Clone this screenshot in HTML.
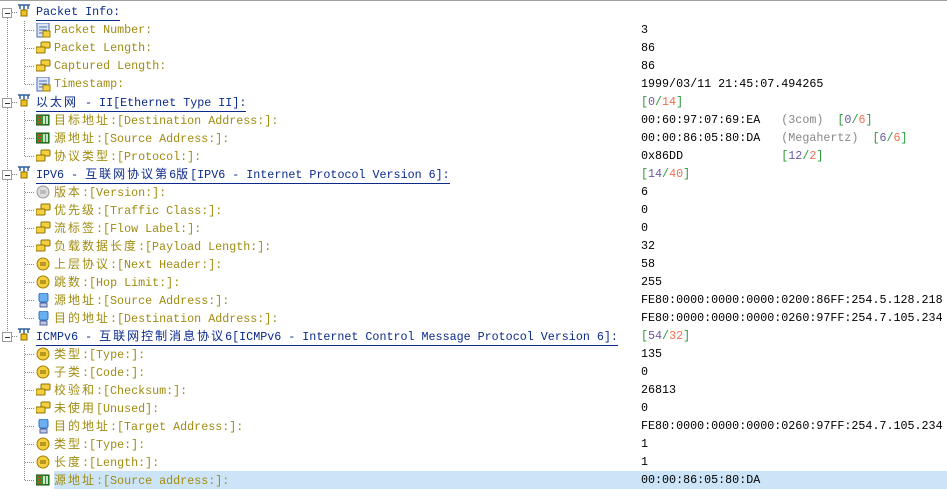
<!DOCTYPE html>
<html><head><meta charset="utf-8"><style>
body{margin:0;width:947px;height:498px;background:#fff;overflow:hidden;position:relative;font-family:"Liberation Mono","Noto Sans CJK SC",monospace;font-size:11.7px}
.top{position:absolute;left:0;top:0;width:947px;height:1px;background:#a0a0a0}
.r{position:absolute;left:0;height:18px;line-height:18px;white-space:nowrap;width:947px}
.h{position:absolute;left:36px;color:#0a2a8c;border-bottom:1px solid #0a2a8c;line-height:16px;top:1px}
.l{position:absolute;left:54px;color:#a08c10;top:0px}
.v{position:absolute;left:641px;color:#000;top:0px}
.c{font-family:"Noto Sans CJK SC",sans-serif;font-size:12px;letter-spacing:2px}
.g{color:#888}
.bk{color:#2a9a3a}.n1{color:#6a5aa0}.n2{color:#f07050}
.vd{position:absolute;width:1px;background-image:linear-gradient(#888 50%,transparent 50%);background-size:1px 2px}
.hd{position:absolute;height:1px;background-image:linear-gradient(90deg,#888 50%,transparent 50%);background-size:2px 1px}
.box{position:absolute;left:2px;width:8px;height:8px;border:1px solid #999;background:#fff}
.box:after{content:"";position:absolute;left:2px;top:4px;width:5px;height:1px;background:#333}
.ic{position:absolute;left:36px;top:2px}
.ri{position:absolute;left:17px;top:1px}
.sel{position:absolute;left:54px;top:471px;width:893px;height:18px;background:#cce4f7}
</style></head><body>
<div class="top"></div>
<div class="sel"></div>
<div class="vd" style="left:7px;top:18px;height:316px"></div>
<div class="vd" style="left:24px;top:21px;height:63px"></div>
<div class="vd" style="left:24px;top:111px;height:45px"></div>
<div class="vd" style="left:24px;top:183px;height:135px"></div>
<div class="vd" style="left:24px;top:345px;height:135px"></div>
<svg width="0" height="0" style="position:absolute">
<defs>
<g id="doc"><rect x="1" y="0" width="12" height="14" fill="#dde6f8" stroke="#4a6ab0"/><path d="M3 4h8M3 7h8M3 10h5" stroke="#4a6ab0"/><rect x="7" y="8" width="7" height="6" fill="#f4d040" stroke="#a08000"/></g>
<g id="tag"><rect x="5" y="1" width="9" height="6" rx="1" fill="#f4d040" stroke="#907000"/><rect x="0" y="6" width="9" height="6" rx="1" fill="#f4d040" stroke="#907000"/></g>
<g id="chip"><rect x="0" y="2" width="13" height="10" fill="#2a9a2a" stroke="#105010"/><path d="M2 4h3M2 7h3M2 10h3" stroke="#e03030" stroke-width="1.5"/><path d="M8 3v8M11 3v8" stroke="#fff" stroke-width="1.5"/></g>
<g id="gc"><circle cx="7" cy="7" r="6" fill="#ddd" stroke="#999"/><path d="M4 6h6M4 8h6" stroke="#999"/></g>
<g id="yc"><circle cx="7" cy="7" r="6" fill="#f4d040" stroke="#a08000"/><path d="M4 6h6M4 8h6" stroke="#806000"/></g>
<g id="mon"><rect x="3" y="0" width="9" height="9" rx="2" fill="#6ab0f0" stroke="#3070c0"/><rect x="4" y="10" width="7" height="4" fill="#c0c8e0" stroke="#5060a0"/></g>
<g id="root"><path d="M1 1h12M7 1v5M3 1v4M11 1v4" stroke="#3060a0" stroke-width="1.5"/><rect x="4" y="6" width="6" height="6" fill="#f0c020" stroke="#907000"/></g>
</defs></svg>

<div class="r" style="top:3px"><div class="box" style="top:5px"></div><div class="hd" style="left:12px;top:9px;width:5px"></div><svg class="ri" width="14" height="14"><use href="#root"/></svg><span class="h">Packet Info:</span></div>
<div class="r" style="top:21px"><div class="hd" style="left:25px;top:9px;width:10px"></div><svg class="ic" width="15" height="15"><use href="#doc"/></svg><span class="l">Packet Number:</span><span class="v">3</span></div>
<div class="r" style="top:39px"><div class="hd" style="left:25px;top:9px;width:10px"></div><svg class="ic" width="15" height="15"><use href="#tag"/></svg><span class="l">Packet Length:</span><span class="v">86</span></div>
<div class="r" style="top:57px"><div class="hd" style="left:25px;top:9px;width:10px"></div><svg class="ic" width="15" height="15"><use href="#tag"/></svg><span class="l">Captured Length:</span><span class="v">86</span></div>
<div class="r" style="top:75px"><div class="hd" style="left:25px;top:9px;width:10px"></div><svg class="ic" width="15" height="15"><use href="#doc"/></svg><span class="l">Timestamp:</span><span class="v">1999/03/11 21:45:07.494265</span></div>

<div class="r" style="top:93px"><div class="box" style="top:5px"></div><div class="hd" style="left:12px;top:9px;width:5px"></div><svg class="ri" width="14" height="14"><use href="#root"/></svg><span class="h"><span class="c">以太网</span> - II[Ethernet Type II]:</span><span class="v"><span class="bk">[</span><span class="n1">0</span><span class="bk">/</span><span class="n2">14</span><span class="bk">]</span></span></div>
<div class="r" style="top:111px"><div class="hd" style="left:25px;top:9px;width:10px"></div><svg class="ic" width="15" height="15"><use href="#chip"/></svg><span class="l"><span class="c">目标地址</span>:[Destination Address:]:</span><span class="v">00:60:97:07:69:EA&nbsp;&nbsp;&nbsp;<span class="g">(3com)</span>&nbsp;&nbsp;<span class="bk">[</span><span class="n1">0</span><span class="bk">/</span><span class="n2">6</span><span class="bk">]</span></span></div>
<div class="r" style="top:129px"><div class="hd" style="left:25px;top:9px;width:10px"></div><svg class="ic" width="15" height="15"><use href="#chip"/></svg><span class="l"><span class="c">源地址</span>:[Source Address:]:</span><span class="v">00:00:86:05:80:DA&nbsp;&nbsp;&nbsp;<span class="g">(Megahertz)</span>&nbsp;&nbsp;<span class="bk">[</span><span class="n1">6</span><span class="bk">/</span><span class="n2">6</span><span class="bk">]</span></span></div>
<div class="r" style="top:147px"><div class="hd" style="left:25px;top:9px;width:10px"></div><svg class="ic" width="15" height="15"><use href="#tag"/></svg><span class="l"><span class="c">协议类型</span>:[Protocol:]:</span><span class="v">0x86DD&nbsp;&nbsp;&nbsp;&nbsp;&nbsp;&nbsp;&nbsp;&nbsp;&nbsp;&nbsp;&nbsp;&nbsp;&nbsp;&nbsp;<span class="bk">[</span><span class="n1">12</span><span class="bk">/</span><span class="n2">2</span><span class="bk">]</span></span></div>

<div class="r" style="top:165px"><div class="box" style="top:5px"></div><div class="hd" style="left:12px;top:9px;width:5px"></div><svg class="ri" width="14" height="14"><use href="#root"/></svg><span class="h">IPV6 - <span class="c">互联网协议第</span>6<span class="c">版</span>[IPV6 - Internet Protocol Version 6]:</span><span class="v"><span class="bk">[</span><span class="n1">14</span><span class="bk">/</span><span class="n2">40</span><span class="bk">]</span></span></div>
<div class="r" style="top:183px"><div class="hd" style="left:25px;top:9px;width:10px"></div><svg class="ic" width="15" height="15"><use href="#gc"/></svg><span class="l"><span class="c">版本</span>:[Version:]:</span><span class="v">6</span></div>
<div class="r" style="top:201px"><div class="hd" style="left:25px;top:9px;width:10px"></div><svg class="ic" width="15" height="15"><use href="#tag"/></svg><span class="l"><span class="c">优先级</span>:[Traffic Class:]:</span><span class="v">0</span></div>
<div class="r" style="top:219px"><div class="hd" style="left:25px;top:9px;width:10px"></div><svg class="ic" width="15" height="15"><use href="#tag"/></svg><span class="l"><span class="c">流标签</span>:[Flow Label:]:</span><span class="v">0</span></div>
<div class="r" style="top:237px"><div class="hd" style="left:25px;top:9px;width:10px"></div><svg class="ic" width="15" height="15"><use href="#tag"/></svg><span class="l"><span class="c">负载数据长度</span>:[Payload Length:]:</span><span class="v">32</span></div>
<div class="r" style="top:255px"><div class="hd" style="left:25px;top:9px;width:10px"></div><svg class="ic" width="15" height="15"><use href="#yc"/></svg><span class="l"><span class="c">上层协议</span>:[Next Header:]:</span><span class="v">58</span></div>
<div class="r" style="top:273px"><div class="hd" style="left:25px;top:9px;width:10px"></div><svg class="ic" width="15" height="15"><use href="#yc"/></svg><span class="l"><span class="c">跳数</span>:[Hop Limit:]:</span><span class="v">255</span></div>
<div class="r" style="top:291px"><div class="hd" style="left:25px;top:9px;width:10px"></div><svg class="ic" width="15" height="15"><use href="#mon"/></svg><span class="l"><span class="c">源地址</span>:[Source Address:]:</span><span class="v">FE80:0000:0000:0000:0200:86FF:254.5.128.218</span></div>
<div class="r" style="top:309px"><div class="hd" style="left:25px;top:9px;width:10px"></div><svg class="ic" width="15" height="15"><use href="#mon"/></svg><span class="l"><span class="c">目的地址</span>:[Destination Address:]:</span><span class="v">FE80:0000:0000:0000:0260:97FF:254.7.105.234</span></div>

<div class="r" style="top:327px"><div class="box" style="top:5px"></div><div class="hd" style="left:12px;top:9px;width:5px"></div><svg class="ri" width="14" height="14"><use href="#root"/></svg><span class="h">ICMPv6 - <span class="c">互联网控制消息协议</span>6[ICMPv6 - Internet Control Message Protocol Version 6]:</span><span class="v"><span class="bk">[</span><span class="n1">54</span><span class="bk">/</span><span class="n2">32</span><span class="bk">]</span></span></div>
<div class="r" style="top:345px"><div class="hd" style="left:25px;top:9px;width:10px"></div><svg class="ic" width="15" height="15"><use href="#yc"/></svg><span class="l"><span class="c">类型</span>:[Type:]:</span><span class="v">135</span></div>
<div class="r" style="top:363px"><div class="hd" style="left:25px;top:9px;width:10px"></div><svg class="ic" width="15" height="15"><use href="#yc"/></svg><span class="l"><span class="c">子类</span>:[Code:]:</span><span class="v">0</span></div>
<div class="r" style="top:381px"><div class="hd" style="left:25px;top:9px;width:10px"></div><svg class="ic" width="15" height="15"><use href="#tag"/></svg><span class="l"><span class="c">校验和</span>:[Checksum:]:</span><span class="v">26813</span></div>
<div class="r" style="top:399px"><div class="hd" style="left:25px;top:9px;width:10px"></div><svg class="ic" width="15" height="15"><use href="#tag"/></svg><span class="l"><span class="c">未使用</span>[Unused]:</span><span class="v">0</span></div>
<div class="r" style="top:417px"><div class="hd" style="left:25px;top:9px;width:10px"></div><svg class="ic" width="15" height="15"><use href="#mon"/></svg><span class="l"><span class="c">目的地址</span>:[Target Address:]:</span><span class="v">FE80:0000:0000:0000:0260:97FF:254.7.105.234</span></div>
<div class="r" style="top:435px"><div class="hd" style="left:25px;top:9px;width:10px"></div><svg class="ic" width="15" height="15"><use href="#yc"/></svg><span class="l"><span class="c">类型</span>:[Type:]:</span><span class="v">1</span></div>
<div class="r" style="top:453px"><div class="hd" style="left:25px;top:9px;width:10px"></div><svg class="ic" width="15" height="15"><use href="#yc"/></svg><span class="l"><span class="c">长度</span>:[Length:]:</span><span class="v">1</span></div>
<div class="r" style="top:471px"><div class="hd" style="left:25px;top:9px;width:10px"></div><svg class="ic" width="15" height="15"><use href="#chip"/></svg><span class="l"><span class="c">源地址</span>:[Source address:]:</span><span class="v">00:00:86:05:80:DA</span></div>
</body></html>
